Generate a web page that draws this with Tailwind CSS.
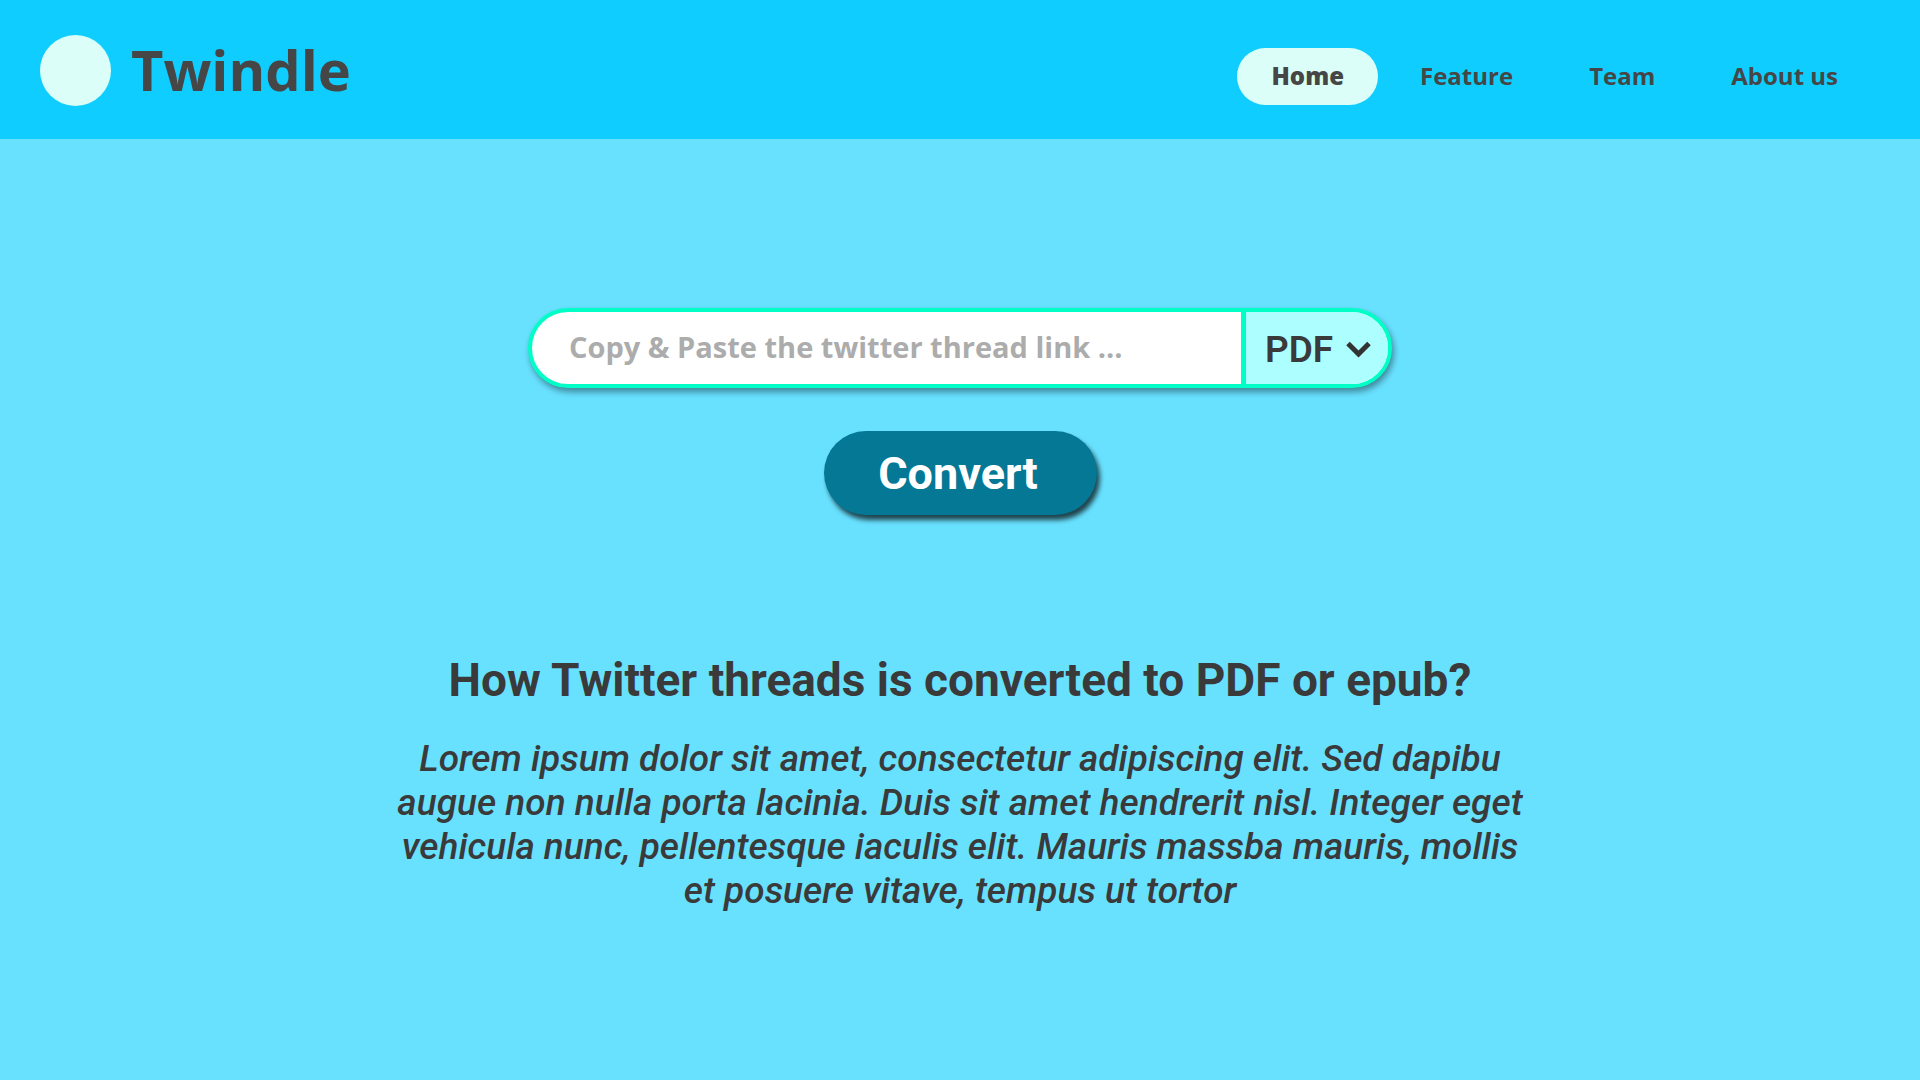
<!DOCTYPE html>
<html lang="en">
<head>
<meta charset="utf-8">
<meta name="viewport" content="width=device-width, initial-scale=1">
<title>Twindle</title>
<script src="https://cdn.jsdelivr.net/npm/@tailwindcss/browser@4"></script>
</head>
<body class="min-h-screen bg-[#68e1ff] font-['Roboto',sans-serif] text-[#3a3a3a]">
  <header class="flex h-[139px] items-center justify-between bg-[#0fceff] px-10 pt-[2px] font-['Open_Sans',sans-serif] font-bold text-[#464646]">
    <a href="#" class="flex items-center gap-5 text-[56px] leading-[68px]">
      <span class="size-[71px] rounded-full bg-[#dbfff8]"></span>
      <span class="pb-1">Twindle</span>
    </a>
    <nav class="flex items-center gap-2 pt-3 pr-2 text-[24px] leading-[55px]">
      <a href="#" class="rounded-full bg-[#dbfff8] px-[34px] pb-[2px] font-extrabold">Home</a>
      <a href="#" class="px-[34px] pb-[2px]">Feature</a>
      <a href="#" class="px-[34px] pb-[2px]">Team</a>
      <a href="#" class="px-[34px] pb-[2px]">About us</a>
    </nav>
  </header>
  <main class="flex flex-col items-center px-6 pt-[169px] pb-20">
    <form class="flex w-full max-w-[864px] flex-col items-center gap-[43px]">
      <div class="flex h-20 w-full overflow-hidden rounded-full border-4 border-[#00ffc7] bg-white shadow-[2px_4px_6px_rgba(0,0,0,0.4)]">
        <input type="text" aria-label="Twitter thread link" placeholder="Copy &amp; Paste the twitter thread link ..." class="min-w-0 flex-1 pb-[2px] pl-[37px] font-['Open_Sans',sans-serif] text-[29px] font-bold outline-none placeholder:text-[#acacac]">
        <div class="relative w-[147px] border-l-5 border-[#00ffc7] bg-[#adffff]">
          <select aria-label="Output format" class="size-full appearance-none pt-[3px] pl-[19px] text-[37px] font-semibold outline-none">
            <option>PDF</option>
            <option>epub</option>
          </select>
          <svg class="pointer-events-none absolute top-[29px] right-[17px] h-[17px] w-[25px]" viewBox="0 0 25 17" fill="none" stroke="#333" stroke-width="5" aria-hidden="true"><path d="M2 2.5 12.5 13 23 2.5"/></svg>
        </div>
      </div>
      <button type="button" class="h-[84px] w-[273px] rounded-full bg-[#047895] pt-[2px] pr-1 text-[45px] font-bold text-white shadow-[3px_5px_5px_rgba(0,0,0,0.7)]">Convert</button>
    </form>
    <section class="mt-[137px] max-w-[1150px] text-center">
      <h1 class="text-[46px] leading-[56px] font-bold">How Twitter threads is converted to PDF or epub?</h1>
      <p class="mt-[29px] text-[37px] leading-[44px] font-medium italic">Lorem ipsum dolor sit amet, consectetur adipiscing elit. Sed dapibu augue non nulla porta lacinia. Duis sit amet hendrerit nisl. Integer eget vehicula nunc, pellentesque iaculis elit. Mauris massba mauris, mollis et posuere vitave, tempus ut tortor</p>
    </section>
  </main>
</body>
</html>
